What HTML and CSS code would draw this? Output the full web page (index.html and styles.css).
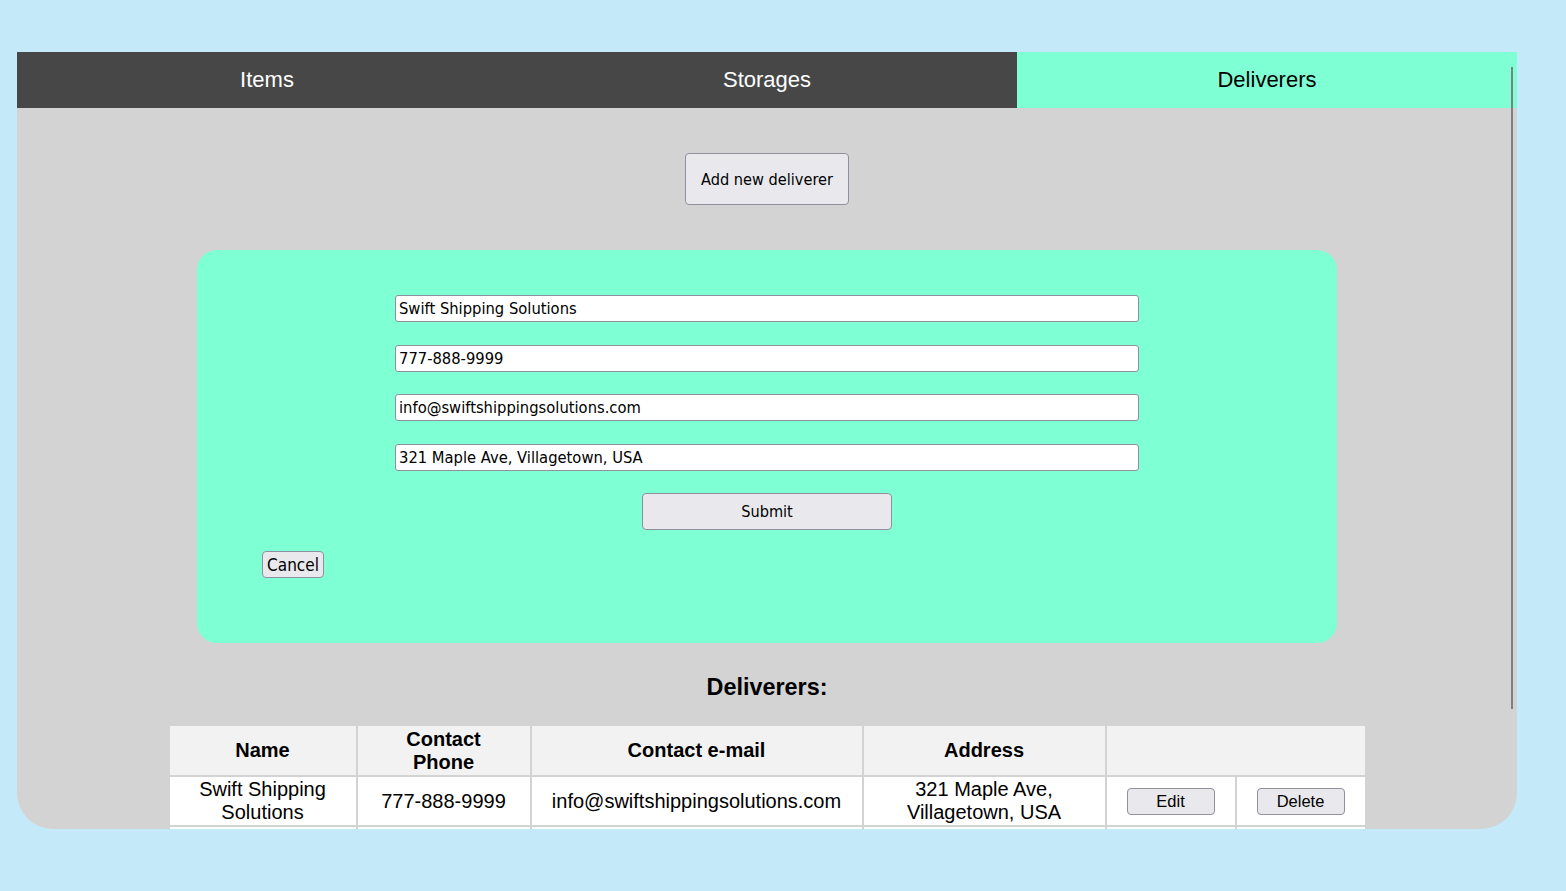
FILE: index.html
```html
<!DOCTYPE html>
<html lang="en">
<head>
<meta charset="utf-8">
<title>Deliverers</title>
<link rel="stylesheet" href="styles.css">
</head>
<body>
<div class="app">
  <nav class="tabs">
    <div class="tab">Items</div>
    <div class="tab">Storages</div>
    <div class="tab active">Deliverers</div>
  </nav>
  <main class="content">
    <button class="btn add-btn" type="button">Add new deliverer</button>
    <form class="form-panel">
      <input class="field" type="text" value="Swift Shipping Solutions">
      <input class="field" type="text" value="777-888-9999">
      <input class="field" type="text" value="info@swiftshippingsolutions.com">
      <input class="field" type="text" value="321 Maple Ave, Villagetown, USA">
      <button class="btn submit-btn" type="button">Submit</button>
      <button class="btn cancel-btn" type="button">Cancel</button>
    </form>
    <h3 class="list-title">Deliverers:</h3>
    <table class="list">
      <colgroup>
        <col class="c-name"><col class="c-phone"><col class="c-email"><col class="c-addr"><col class="c-act"><col class="c-act2">
      </colgroup>
      <thead>
        <tr>
          <th>Name</th>
          <th>Contact Phone</th>
          <th class="wide">Contact e-mail</th>
          <th>Address</th>
          <th colspan="2"></th>
        </tr>
      </thead>
      <tbody>
        <tr>
          <td>Swift Shipping Solutions</td>
          <td>777-888-9999</td>
          <td class="wide">info@swiftshippingsolutions.com</td>
          <td>321 Maple Ave, Villagetown, USA</td>
          <td class="act"><button class="btn row-btn" type="button">Edit</button></td>
          <td class="act"><button class="btn row-btn" type="button">Delete</button></td>
        </tr>
        <tr class="next-row">
          <td></td>
          <td></td>
          <td class="wide"></td>
          <td></td>
          <td class="act"></td>
          <td class="act"></td>
        </tr>
      </tbody>
    </table>
  </main>
  <div class="scroll-thumb"></div>
</div>
</body>
</html>
```
FILE: styles.css
```css
html, body {
  margin: 0;
  padding: 0;
}

body {
  background: #c4eaf9;
  font-family: "Liberation Sans", Arial, sans-serif;
  font-size: 20px;
  color: #000;
}

.app {
  position: relative;
  margin: 52px 0 0 17px;
  width: 1500px;
  height: 777px;
  background: #d3d3d3;
  border-radius: 0 0 36px 36px;
  overflow: hidden;
}

.tabs {
  display: flex;
  height: 56px;
  background: #474747;
}

.tab {
  flex: 1;
  display: flex;
  align-items: center;
  justify-content: center;
  color: #fff;
  font-size: 22px;
}

.tab.active {
  background: #7fffd4;
  color: #000;
}

.content {
  display: flex;
  flex-direction: column;
  align-items: center;
  padding-top: 45px;
}

.btn {
  font-family: "DejaVu Sans Condensed", "DejaVu Sans", Tahoma, sans-serif;
  font-stretch: condensed;
  font-size: 16.2px;
  color: #000;
  background: #e9e9ed;
  border: 1px solid #8f8f9d;
  border-radius: 4px;
  padding: 0;
  margin: 0;
  box-sizing: border-box;
}

.add-btn {
  width: 164px;
  height: 52px;
  margin-bottom: 45px;
}

.form-panel {
  box-sizing: border-box;
  width: 1140px;
  height: 393px;
  margin: 0;
  padding-top: 45px;
  background: #7fffd4;
  border-radius: 20px;
  display: flex;
  flex-direction: column;
  align-items: center;
  gap: 22.5px;
}

.field {
  box-sizing: border-box;
  width: 744px;
  height: 27px;
  margin: 0;
  padding: 0 3px;
  font-family: "DejaVu Sans Condensed", "DejaVu Sans", Tahoma, sans-serif;
  font-stretch: condensed;
  font-size: 16.4px;
  color: #000;
  background: #fff;
  border: 1px solid #8f8f9d;
  border-radius: 3px;
}

.submit-btn {
  width: 250px;
  height: 37px;
}

.cancel-btn {
  align-self: flex-start;
  margin-left: 65px;
  margin-top: -1.5px;
  width: 62px;
  height: 27px;
  font-size: 17px;
}

.list-title {
  margin: 31px 0 23px;
  font-size: 23.4px;
  font-weight: bold;
  line-height: 27px;
}

.list {
  border-collapse: separate;
  border-spacing: 2px;
  table-layout: fixed;
  width: 1199px;
  background: #d3d3d3;
}

.c-name { width: 186px; }
.c-phone { width: 172px; }
.c-email { width: 330px; }
.c-addr { width: 241px; }
.c-act { width: 128px; }
.c-act2 { width: 128px; }

.list th,
.list td {
  padding: 1px 18px;
  text-align: center;
  line-height: 23px;
  font-size: 20px;
}

.list th {
  background: #f2f2f2;
  font-weight: bold;
  height: 47px;
}

.list td {
  background: #fff;
  height: 45px;
}

.list .wide {
  padding: 1px 10px;
}

.list .act {
  padding: 1px 0;
}

.row-btn {
  width: 88px;
  height: 27px;
  font-family: "Liberation Sans", Arial, sans-serif;
  font-stretch: normal;
  font-size: 16.5px;
}

.scroll-thumb {
  position: absolute;
  top: 15px;
  right: 4px;
  width: 2px;
  height: 642px;
  background: #808080;
}
```
